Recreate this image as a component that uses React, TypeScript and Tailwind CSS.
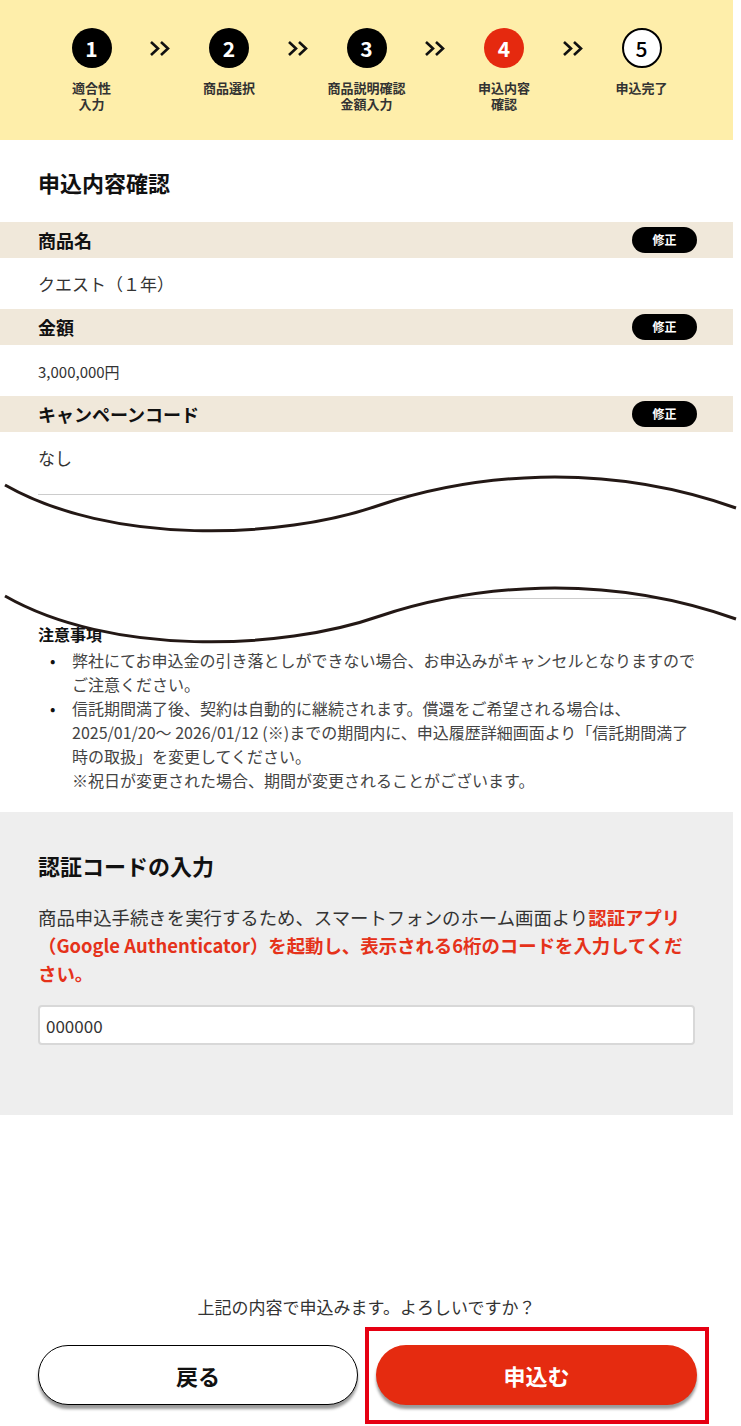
const steps = [
  { no: 1, label: ["適合性", "入力"], state: "done" },
  { no: 2, label: ["商品選択"], state: "done" },
  { no: 3, label: ["商品説明確認", "金額入力"], state: "done" },
  { no: 4, label: ["申込内容", "確認"], state: "current" },
  { no: 5, label: ["申込完了"], state: "todo" },
];

const rows = [
  { label: "商品名", value: "クエスト（１年）", small: false },
  { label: "金額", value: "3,000,000円", small: true },
  { label: "キャンペーンコード", value: "なし", small: false },
];

function Chevrons() {
  return (
    <div className="w-[37.5px] h-[40px] flex items-center justify-center">
      <svg width="22" height="17" viewBox="0 0 22 17" fill="none" stroke="#111" strokeWidth="2.6">
        <polyline points="2,2 9,8.5 2,15" />
        <polyline points="12,2 19,8.5 12,15" />
      </svg>
    </div>
  );
}

function StepItem({ no, label, state }: { no: number; label: string[]; state: string }) {
  const circle =
    state === "current"
      ? "bg-[#e5290f] text-white font-bold"
      : state === "todo"
        ? "bg-white text-black border-2 border-black font-medium"
        : "bg-black text-white font-bold";
  return (
    <div className="w-[100px] flex flex-col items-center">
      <div className={`w-[40px] h-[40px] rounded-full flex items-center justify-center text-[21px] leading-none ${circle}`}>{no}</div>
      <div className="mt-3 text-[13px] leading-[16px] font-bold text-[#333] text-center whitespace-nowrap">
        {label.map((l) => (
          <div key={l}>{l}</div>
        ))}
      </div>
    </div>
  );
}

export default function App() {
  return (
    <div className="relative w-[741px] min-h-[1426px] bg-white font-['Noto_Sans_CJK_JP','Noto_Sans',sans-serif] text-[#222]">
      <div className="w-[733px]">
        {/* stepper */}
        <div className="h-[140px] bg-[#feeeaa] flex justify-center pt-[28px]">
          {steps.map((s, i) => (
            <div key={s.no} className="flex items-start">
              <StepItem no={s.no} label={s.label} state={s.state} />
              {i < steps.length - 1 && <Chevrons />}
            </div>
          ))}
        </div>

        <h1 className="pt-[27px] mb-[25px] px-[38px] text-[22px] leading-[30px] font-bold text-[#111]">申込内容確認</h1>

        {rows.map((r) => (
          <div key={r.label}>
            <div className="h-[36px] bg-[#f0e8da] flex items-center justify-between pl-[38px] pr-[36px]">
              <span className="text-[18px] font-bold text-[#111]">{r.label}</span>
              <span className="w-[65px] h-[26px] rounded-full bg-black text-white text-[12px] font-bold flex items-center justify-center">修正</span>
            </div>
            <div className={`h-[51px] flex items-center px-[38px] text-[#333] ${r.small ? "text-[15px] pt-[4px]" : "text-[17px]"}`}>{r.value}</div>
          </div>
        ))}

        <div className="mt-[11px] mx-[38px] border-t border-[#cccccc]" />
        <div className="mt-[103px] mx-[38px] border-t border-[#cccccc]" />

        {/* notes */}
        <div className="pl-[38px] pr-[32px] mt-[25px] text-[#444]">
          <div className="text-[16px] leading-[20px] font-bold text-[#111]">注意事項</div>
          <ul className="mt-1 text-[16px] leading-[24px]">
            <li className="flex">
              <span className="w-[34px] shrink-0 pl-[12px] text-[#111]">•</span>
              <span>弊社にてお申込金の引き落としができない場合、お申込みがキャンセルとなりますのでご注意ください。</span>
            </li>
            <li className="flex">
              <span className="w-[34px] shrink-0 pl-[12px] text-[#111]">•</span>
              <span>
                信託期間満了後、契約は自動的に継続されます。償還をご希望される場合は、
                <br />
                2025/01/20～ 2026/01/12 (※)までの期間内に、申込履歴詳細画面より「信託期間満了時の取扱」を変更してください。
                <br />
                ※祝日が変更された場合、期間が変更されることがございます。
              </span>
            </li>
          </ul>
        </div>

        {/* auth code */}
        <section className="mt-[20px] bg-[#eeeeee] px-[38px] pt-[38px] pb-[70px]">
          <h2 className="text-[22px] leading-[30px] font-bold text-[#111]">認証コードの入力</h2>
          <p className="mt-[23px] text-[18.4px] leading-[28px] text-[#333]">
            商品申込手続きを実行するため、スマートフォンのホーム画面より
            <span className="text-[#e5321a] font-bold">認証アプリ（Google Authenticator）を起動し、表示される6桁のコードを入力してください。</span>
          </p>
          <input
            className="mt-[18px] w-full h-[40px] bg-white border-2 border-[#d8d8d8] rounded-[4px] px-[6px] text-[17px] text-[#333] outline-none"
            defaultValue="000000"
          />
        </section>

        <p className="mt-[179px] text-center text-[17px] leading-[26px] text-[#333]">上記の内容で申込みます。よろしいですか？</p>

        <div className="mt-[7px] pl-[38px] flex items-start">
          <button className="mt-[18px] w-[320px] h-[60px] rounded-full bg-white border-[1.5px] border-black shadow-[0_4px_3px_rgba(0,0,0,0.4)] text-[22px] font-bold text-[#111]">
            戻る
          </button>
          <div className="ml-[7px] border-4 border-[#e60012] pt-[14px] pb-[15px] pl-[7px] pr-[8px]">
            <button className="w-[321px] h-[60px] rounded-full bg-[#e52b10] shadow-[0_4px_3px_rgba(0,0,0,0.4)] text-[22px] font-bold text-white">
              申込む
            </button>
          </div>
        </div>
      </div>

      {/* omission mark over the cut content */}
      <svg className="absolute left-0 top-[460px] pointer-events-none" width="741" height="210" viewBox="0 460 741 210">
        <path
          d="M5 485 C110 545 280 540 380 505 C470 475 600 460 736 508 L736 619 C600 571 470 586 380 616 C280 651 110 656 5 596 Z"
          fill="#ffffff"
        />
        <path d="M5 485 C110 545 280 540 380 505 C470 475 600 460 736 508" fill="none" stroke="#231815" strokeWidth="3" />
        <path d="M5 596 C110 656 280 651 380 616 C470 586 600 571 736 619" fill="none" stroke="#231815" strokeWidth="3" />
      </svg>
    </div>
  );
}
